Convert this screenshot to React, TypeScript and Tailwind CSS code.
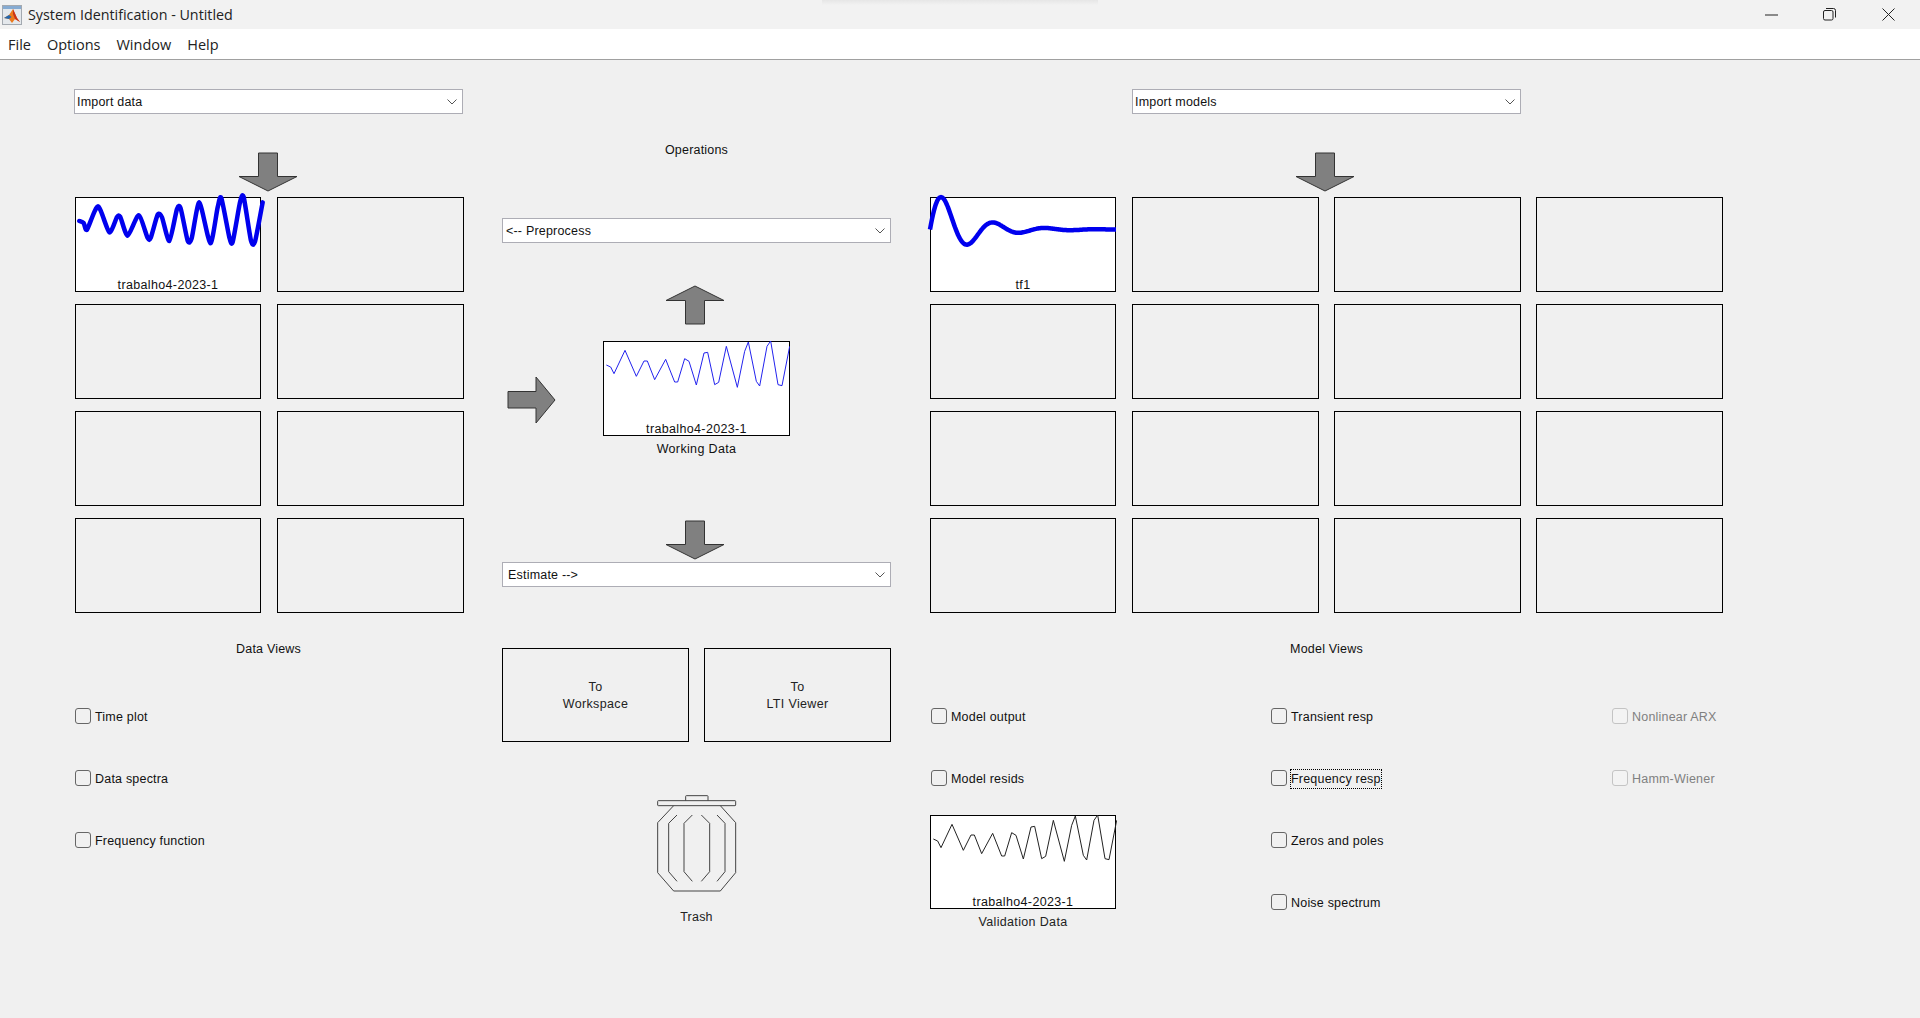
import type { ReactNode } from 'react'

const raw = [
  [380, 706], [393, 712], [403, 732], [436, 662], [470, 740], [493, 694], [503, 694], [525, 750],
  [558, 689], [585, 757], [594, 757], [615, 687], [628, 695], [650, 766], [673, 670], [684, 668],
  [705, 765], [717, 758], [740, 650], [773, 773], [795, 665], [806, 637], [830, 755], [840, 769],
  [862, 650], [873, 634], [895, 765], [907, 768], [930, 650],
]
const pts = raw.map(([x, y]) => [(x - 370) / 3, (y - 634) / 3])
const dataLine = pts.map(([x, y]) => `${x},${y}`).join(' ')

// same points, smoothed for the thick thumbnail
const dataSmooth = pts
  .map(([x, y], i) => {
    if (i === 0) return `M${x} ${y}`
    const p0 = pts[Math.max(i - 2, 0)]
    const p1 = pts[i - 1]
    const p3 = pts[Math.min(i + 1, pts.length - 1)]
    const c1x = p1[0] + (x - p0[0]) / 9
    const c1y = p1[1] + (y - p0[1]) / 9
    const c2x = x - (p3[0] - p1[0]) / 9
    const c2y = y - (p3[1] - p1[1]) / 9
    return `C${c1x.toFixed(1)} ${c1y.toFixed(1)} ${c2x.toFixed(1)} ${c2y.toFixed(1)} ${x} ${y}`
  })
  .join(' ')

// damped step response of tf1
const tfLine = Array.from({ length: 187 }, (_, i) => {
  const t = i * 3
  const y = 32.5 - (138 * Math.exp(-0.0098 * t) * Math.sin((2 * Math.PI * t) / 155)) / 3
  return `${i},${y.toFixed(1)}`
}).join(' ')

function Tile({ label, children, extra = '' }: { label?: string; children?: ReactNode; extra?: string }) {
  return (
    <div className={`relative h-[95px] border border-black flex items-end justify-center ${label ? 'bg-white' : ''} ${extra}`}>
      {children}
      {label && <span className="text-[12.5px] leading-[14px] -mb-px text-[#111] tracking-[0.35px]">{label}</span>}
    </div>
  )
}

function ThinCurve({ color }: { color: string }) {
  return (
    <svg className="absolute -left-px -top-px" width="187" height="94" viewBox="0 0 187 94">
      <polyline points={dataLine} fill="none" stroke={color} strokeWidth="1" strokeLinejoin="round" />
    </svg>
  )
}

function Select({ label, indent = 'pl-[2px]' }: { label: string; indent?: string }) {
  return (
    <div className={`h-[25px] border border-[#adadb5] bg-white flex items-center justify-between ${indent} pr-[5px] text-[12.5px] text-[#111] tracking-[0.2px]`}>
      <span className="mt-[2px]">{label}</span>
      <svg width="10" height="6" viewBox="0 0 10 6">
        <polyline points="0.5,0.5 5,5 9.5,0.5" fill="none" stroke="#555" strokeWidth="1" />
      </svg>
    </div>
  )
}

function ArrowDown() {
  return (
    <svg width="60" height="40" viewBox="0 0 60 40">
      <path d="M20.5 1 H39.5 V24.5 H59 L30 39 L1 24.5 H20.5 Z" fill="#808080" stroke="#333" strokeWidth="1" strokeLinejoin="round" />
    </svg>
  )
}

function Check({ label, disabled, focused }: { label: string; disabled?: boolean; focused?: boolean }) {
  return (
    <div className="flex items-center gap-1 h-4">
      <span className={`w-4 h-4 rounded-[3px] border ${disabled ? 'border-[#c4c4c4] bg-[#f3f3f3]' : 'border-[#666]'}`} />
      <span className={`mt-[2px] text-[12.5px] tracking-[0.2px] ${disabled ? 'text-[#808080]' : 'text-[#111]'} ${focused ? 'outline outline-1 outline-dotted outline-black' : ''}`}>
        {label}
      </span>
    </div>
  )
}

function Trash() {
  return (
    <svg width="80" height="98" viewBox="80 45 240 294" fill="none" stroke="#444" strokeWidth="3">
      <rect x="82" y="62" width="234" height="15" rx="2" />
      <path d="M166 62 V49 Q166 47 168 47 H231 Q233 47 233 49 V62" />
      <path d="M130 77 L82 128 V278 L130 333 H270 L316 278 V128 L270 77" />
      <path d="M140 105 L115 130 V275 L140 304" />
      <path d="M186 105 L161 130 V275 L186 304" />
      <path d="M213 105 L238 130 V275 L213 304" />
      <path d="M260 105 L284 130 V275 L260 304" />
    </svg>
  )
}

export default function App() {
  return (
    <div className="w-[1920px] h-[1018px] overflow-hidden bg-[#f0f0f0] font-['Liberation_Sans',Arial,sans-serif]">
      <div className="relative h-[29px] bg-[#f2f2f2] flex items-center justify-between pr-[2px] font-['Open_Sans',sans-serif]">
        {/* soft shadow of a window sitting above the screen edge */}
        <div className="absolute left-[822px] top-0 w-[276px] h-[5px] bg-gradient-to-b from-[#e6e6e6] to-transparent" />
        <div className="flex items-center pl-[2px] gap-[6px]">
          <svg width="20" height="20" viewBox="0 0 20 20">
            <rect x="0.5" y="0.5" width="19" height="19" fill="#e4e8ec" stroke="#a3a9b0" />
            <rect x="1" y="1" width="18" height="3" fill="#86abd2" />
            <path d="M2 13 L7 10 L11 4 L15 13 L18 17 L13 14 L10 18 L7 14 Z" fill="#ec7a1c" />
            <path d="M2 13 L7 10 L9.5 12 L7 14 Z" fill="#2467ad" />
            <path d="M11 4 L15 13 L18 17 L13 14 L11 9 Z" fill="#c8321a" />
          </svg>
          <span className="text-[14.3px] text-[#222]">System Identification - Untitled</span>
        </div>
        <div className="flex items-center">
          <div className="w-[58px] flex justify-center">
            <svg width="13" height="2" viewBox="0 0 13 2"><path d="M0 1 H13" stroke="#222" strokeWidth="1" /></svg>
          </div>
          <div className="w-[59px] flex justify-center">
            <svg width="13" height="13" viewBox="0 0 13 13" fill="none" stroke="#222" strokeWidth="1">
              <rect x="0.5" y="2.5" width="9.5" height="9.5" rx="1.5" />
              <path d="M3 0.5 H10.5 Q12.5 0.5 12.5 2.5 V9.5" />
            </svg>
          </div>
          <div className="w-[59px] flex justify-center">
            <svg width="13" height="13" viewBox="0 0 13 13"><path d="M0.5 0.5 L12.5 12.5 M12.5 0.5 L0.5 12.5" stroke="#222" strokeWidth="1" /></svg>
          </div>
        </div>
      </div>

      <div className="h-[31px] bg-white border-b border-[#a0a0a0] flex items-center gap-4 pl-2 pt-[2px] text-[14.5px] text-[#222] font-['Open_Sans',sans-serif]">
        <span>File</span>
        <span>Options</span>
        <span>Window</span>
        <span>Help</span>
      </div>

      <div className="flex items-start pl-[74px]">
        <div className="w-[390px]">
          <div className="mt-[29px] w-[389px]"><Select label="Import data" /></div>
          <div className="mt-[38px] ml-[164px] h-[45px]"><ArrowDown /></div>
          <div className="ml-px grid grid-cols-[186px_187px] gap-x-4 gap-y-3">
            <Tile label="trabalho4-2023-1">
              <svg className="absolute -left-px -top-px overflow-visible" width="187" height="94" viewBox="0 0 187 94">
                <path d={dataSmooth} transform="translate(1 0)" fill="none" stroke="#0000ee" strokeWidth="4.5" strokeLinejoin="round" strokeLinecap="round" />
              </svg>
            </Tile>
            <Tile />
            <Tile />
            <Tile />
            <Tile />
            <Tile />
            <Tile />
            <Tile />
          </div>
          <p className="mt-[28px] w-[389px] text-center text-[12.5px] leading-4 text-[#111] tracking-[0.2px]">Data Views</p>
          <div className="mt-[51px] ml-px flex flex-col gap-[46px]">
            <Check label="Time plot" />
            <Check label="Data spectra" />
            <Check label="Frequency function" />
          </div>
        </div>

        <div className="w-[389px] ml-[38px]">
          <p className="mt-[82px] text-center text-[12.5px] leading-4 text-[#111] tracking-[0.2px]">Operations</p>
          <div className="mt-[60px]"><Select label="<-- Preprocess" indent="pl-[3px]" /></div>
          <div className="mt-[42px] ml-[163px] h-[56px]">
            <div className="rotate-180 w-[60px]"><ArrowDown /></div>
          </div>
          <div className="flex items-start">
            <svg className="ml-[5px] mt-[35px]" width="49" height="48" viewBox="0 0 49 48">
              <path d="M1 15.5 H29 V1 L48 24 L29 47 V32 H1 Z" fill="#808080" stroke="#333" strokeWidth="1" strokeLinejoin="round" />
            </svg>
            <div className="ml-[47px] w-[187px]"><Tile label="trabalho4-2023-1"><ThinCurve color="#2222ee" /></Tile></div>
          </div>
          <p className="ml-[101px] w-[187px] mt-[5px] text-center text-[12.5px] leading-4 text-[#111] tracking-[0.35px]">Working Data</p>
          <div className="mt-[63px] ml-[163px] h-[42px]"><ArrowDown /></div>
          <Select label="Estimate -->" indent="pl-[5px]" />
          <div className="mt-[61px] grid grid-cols-[187px_187px] gap-x-[15px]">
            {['Workspace', 'LTI Viewer'].map((t) => (
              <div key={t} className="h-[94px] pt-px border border-black flex flex-col items-center justify-center text-[12.5px] leading-[17px] text-[#222] tracking-[0.35px]">
                <span>To</span>
                <span>{t}</span>
              </div>
            ))}
          </div>
          <div className="mt-[53px] ml-[155px]"><Trash /></div>
          <p className="mt-[16px] text-center text-[12.5px] leading-4 text-[#222] tracking-[0.2px]">Trash</p>
        </div>

        <div className="ml-[39px] w-[794px]">
          <div className="mt-[29px] ml-[202px] w-[389px]"><Select label="Import models" /></div>
          <div className="mt-[38px] ml-[365px] h-[45px]"><ArrowDown /></div>
          <div className="grid grid-cols-[202px_202px_202px_187px] gap-y-3">
            <Tile label="tf1" extra="w-[186px]">
              <svg className="absolute -left-px -top-px overflow-visible" width="187" height="94" viewBox="0 0 187 94">
                <polyline points={tfLine} fill="none" stroke="#0000ee" strokeWidth="4.5" strokeLinejoin="round" />
              </svg>
            </Tile>
            {Array.from({ length: 15 }, (_, i) => (
              <Tile key={i} extra={i % 4 === 3 ? 'w-[186px]' : 'w-[187px]'} />
            ))}
          </div>
          <p className="mt-[28px] ml-[202px] w-[389px] text-center text-[12.5px] leading-4 text-[#111] tracking-[0.2px]">Model Views</p>
          <div className="mt-[51px] flex items-start">
            <div className="w-[341px] pl-px">
              <div className="flex flex-col gap-[46px]">
                <Check label="Model output" />
                <Check label="Model resids" />
              </div>
              <div className="-ml-px mt-[29px] w-[186px]"><Tile label="trabalho4-2023-1" extra="!h-[94px]"><ThinCurve color="#222" /></Tile></div>
              <p className="-ml-px w-[186px] mt-[5px] text-center text-[12.5px] leading-4 text-[#222] tracking-[0.35px]">Validation Data</p>
            </div>
            <div className="w-[341px] flex flex-col gap-[46px]">
              <Check label="Transient resp" />
              <Check label="Frequency resp" focused />
              <Check label="Zeros and poles" />
              <Check label="Noise spectrum" />
            </div>
            <div className="flex flex-col gap-[46px]">
              <Check label="Nonlinear ARX" disabled />
              <Check label="Hamm-Wiener" disabled />
            </div>
          </div>
        </div>
      </div>
    </div>
  )
}
